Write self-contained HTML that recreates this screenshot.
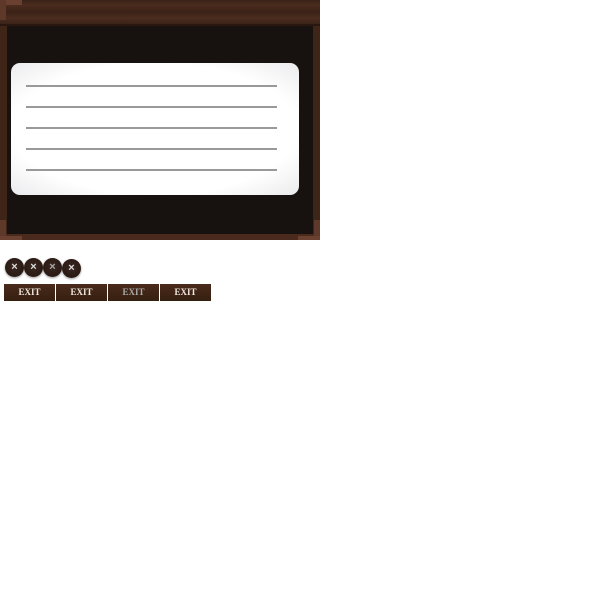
<!DOCTYPE html>
<html><head><style>
body{margin:0;width:600px;height:600px;background:#fff;position:relative;overflow:hidden;font-family:"Liberation Serif",serif}
.a{position:absolute}
.wood{background:linear-gradient(180deg,#3a2218 0%,#4a2c1e 20%,#3b2217 45%,#4b2d1f 70%,#341e14 100%)}
.c{position:absolute;width:19px;height:19px;border-radius:50%;background:radial-gradient(circle at 50% 45%,#3a2820 0%,#2a1a14 70%,#1a0f0a 100%);color:#ddd;font:bold 11px "Liberation Sans",sans-serif;text-align:center;line-height:19px;box-shadow:0 1px 2px rgba(0,0,0,.4)}
.e{position:absolute;top:284px;width:51px;height:17px;background:linear-gradient(180deg,#4a2a1c,#35200f);color:#f0e8e0;font:bold 9px "Liberation Serif",serif;text-align:center;line-height:17px}
</style></head><body>
<div class="a" style="left:0;top:0;width:320px;height:240px;background:#17120f"></div>
<div class="a wood" style="left:0;top:0;width:320px;height:26px"></div>
<div class="a" style="left:0;top:24px;width:320px;height:2px;background:#2a170f"></div>
<div class="a" style="left:0;top:26px;width:7px;height:214px;background:#3f2418"></div>
<div class="a" style="left:313px;top:26px;width:7px;height:214px;background:#3f2418"></div>
<div class="a" style="left:0;top:234px;width:320px;height:6px;background:#4a2a1c"></div>
<div class="a" style="left:0;top:0;width:22px;height:5px;background:#6a4030"></div>
<div class="a" style="left:0;top:0;width:6px;height:20px;background:#5e3828"></div>
<div class="a" style="left:0;top:220px;width:6px;height:20px;background:#5e3828"></div>
<div class="a" style="left:0;top:236px;width:22px;height:4px;background:#6a4030"></div>
<div class="a" style="left:314px;top:220px;width:6px;height:20px;background:#5e3828"></div>
<div class="a" style="left:298px;top:236px;width:22px;height:4px;background:#6a4030"></div>
<div class="a" style="left:11px;top:63px;width:288px;height:132px;border-radius:9px;background:radial-gradient(ellipse at center,#fff 70%,#ebebed 100%)"></div>
<div class="a" style="left:26px;top:85px;width:251px;height:2px;background:#999"></div>
<div class="a" style="left:26px;top:106px;width:251px;height:2px;background:#999"></div>
<div class="a" style="left:26px;top:127px;width:251px;height:2px;background:#999"></div>
<div class="a" style="left:26px;top:148px;width:251px;height:2px;background:#999"></div>
<div class="a" style="left:26px;top:169px;width:251px;height:2px;background:#999"></div>
<div class="c" style="left:5px;top:258px">×</div>
<div class="c" style="left:24px;top:258px">×</div>
<div class="c" style="left:43px;top:258px;color:#aaa">×</div>
<div class="c" style="left:62px;top:259px">×</div>
<div class="e" style="left:4px">EXIT</div>
<div class="e" style="left:56px">EXIT</div>
<div class="e" style="left:108px;color:#aaa">EXIT</div>
<div class="e" style="left:160px">EXIT</div>
</body></html>
